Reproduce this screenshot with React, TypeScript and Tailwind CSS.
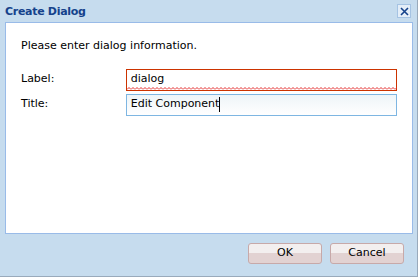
import React from 'react';

const CloseIcon: React.FC = () => (
  <svg width="9" height="9" viewBox="0 0 9 9">
    <path d="M1 1 L8 8 M8 1 L1 8" stroke="#15428b" strokeWidth="1.6" />
  </svg>
);

const Field: React.FC<{ label: string; value: string; invalid?: boolean; focused?: boolean }> = ({
  label,
  value,
  invalid,
  focused
}) => (
  <div className="flex items-center h-[22px]">
    <span className="w-[105px] text-[11px] text-black">{label}</span>
    <div
      className={`relative flex items-center h-[22px] w-[272px] border px-[4px] text-[11px] text-black ${
        invalid ? 'border-[#cc3300] bg-white' : 'border-[#7eb6e2] bg-gradient-to-b from-[#eef5f8] to-white'
      }`}
    >
      <span>{value}</span>
      {focused && <span className="w-px h-[15px] bg-black" />}
      {invalid && (
        <svg className="absolute left-0 bottom-0" width="270" height="3">
          <pattern id="wave" width="4" height="3" patternUnits="userSpaceOnUse">
            <path d="M0 2.5 L2 0.5 L4 2.5" stroke="#e32b2b" strokeWidth="1" fill="none" />
          </pattern>
          <rect width="270" height="3" fill="url(#wave)" />
        </svg>
      )}
    </div>
  </div>
);

export default function App() {
  return (
    <div className="w-[420px] h-[279px] bg-white" style={{ fontFamily: 'Tahoma, "DejaVu Sans", sans-serif' }}>
      <div className="w-[418px] h-[277px] bg-[#c6dcee] border-r border-b border-[#99aabb] flex flex-col px-[5px]">
        <div className="flex items-center justify-between h-[22px]">
          <span className="text-[11px] font-bold text-[#15428b] leading-none pt-px tracking-[-0.3px]">Create Dialog</span>
          <div className="w-[14px] h-[14px] mr-[1px] bg-[#e4eef8] border border-[#a5c3e3] flex items-center justify-center">
            <CloseIcon />
          </div>
        </div>
        <div className="w-[408px] h-[212px] bg-white border border-[#99bbe8] px-[15px] pt-[15px]">
          <p className="text-[11px] text-black">Please enter dialog information.</p>
          <div className="mt-[14px] flex flex-col gap-[3px]">
            <Field label="Label:" value="dialog" invalid />
            <Field label="Title:" value="Edit Component" focused />
          </div>
        </div>
        <div className="flex justify-end gap-[8px] pt-[9px] pr-[8px]">
          {['OK', 'Cancel'].map((t) => (
            <button
              key={t}
              className="w-[74px] h-[21px] rounded-[3px] border border-[#c7a9a9] bg-gradient-to-b from-[#f3efef] from-50% to-[#e2d2d2] to-50% text-[11px] text-black"
            >
              {t}
            </button>
          ))}
        </div>
      </div>
    </div>
  );
}
